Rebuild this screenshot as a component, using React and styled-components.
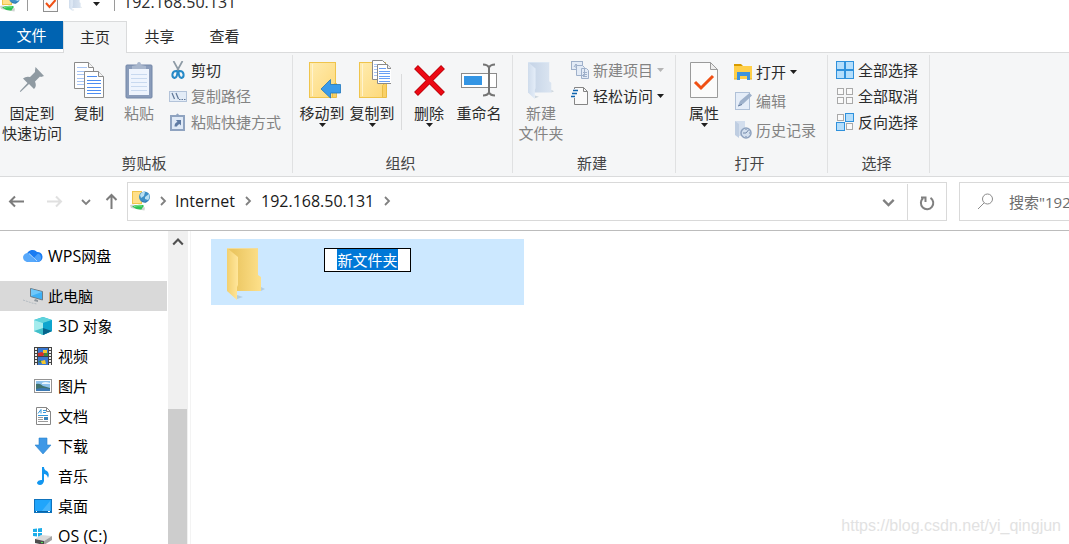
import React, { useEffect, useRef } from 'react';
import styled, { createGlobalStyle } from 'styled-components';

const GlobalStyle = createGlobalStyle`
  * {
    box-sizing: border-box;
  }

  body {
    margin: 0;
    overflow: hidden;
    background: #ffffff;
  }

  body, button, input {
    font-family: 'Open Sans', 'Noto Sans CJK SC', sans-serif;
    font-size: 15px;
    line-height: 20px;
    color: #2b2b2b;
  }

  button {
    margin: 0;
    padding: 0;
    border: none;
    background: none;
    white-space: nowrap;
  }

  svg {
    display: block;
    flex: none;
  }
`;

const Window = styled.div`
  display: flex;
  flex-direction: column;
  height: 100vh;
`;

const Latin = styled.span`
  font-size: 16px;
`;

/* Title bar */

const TitleBar = styled.header`
  display: flex;
  align-items: flex-end;
  height: 21px;
  flex: none;
  overflow: hidden;
`;

const TitleRow = styled.div`
  display: flex;
  align-items: center;
  height: 38px;
  flex: none;
`;

const QuickButton = styled.button`
  display: flex;
  align-items: center;
  justify-content: center;
  width: ${(props) => props.$width || 26}px;
  height: 20px;
`;

const TitleDivider = styled.div`
  width: 1px;
  height: 18px;
  margin: 0 8px 0 7px;
  background: #9a9a9a;
`;

/* Ribbon */

const Tabs = styled.nav`
  display: flex;
  align-items: flex-start;
  height: 31px;
  flex: none;
`;

const FileTab = styled.button`
  width: 63px;
  height: 28px;
  background: #0063b1;
  color: #ffffff;
`;

const Tab = styled.button`
  width: 65px;
  height: 32px;
  padding-bottom: 2px;
  ${(props) =>
    props.$active &&
    `
    position: relative;
    z-index: 1;
    width: 64px;
    background: #f5f6f7;
    border: 1px solid #dadbdc;
    border-bottom: none;
  `}
`;

const Ribbon = styled.div`
  display: flex;
  flex: none;
  padding: 2px 0 3px;
  background: #f5f6f7;
  border-top: 1px solid #dadbdc;
  border-bottom: 1px solid #dadbdc;
`;

const Group = styled.section`
  display: flex;
  flex-direction: column;
  width: ${(props) => props.$width}px;
  flex: none;
  border-right: 1px solid #e0e1e2;
`;

const GroupBody = styled.div`
  display: flex;
  height: 98px;
  padding-left: ${(props) => props.$indent || 0}px;
`;

const GroupLabel = styled.div`
  padding-right: 4px;
  text-align: center;
  color: #444444;
`;

const BigButton = styled.button`
  display: flex;
  flex-direction: column;
  align-items: center;
  width: ${(props) => props.$width || 50}px;
  padding-top: 5px;
  color: ${(props) => (props.disabled ? '#838383' : '#2b2b2b')};
`;

const BigIcon = styled.span`
  display: flex;
  align-items: center;
  justify-content: center;
  height: 40px;
  margin-bottom: 3px;
`;

const ButtonDivider = styled.div`
  width: 1px;
  height: 56px;
  margin: 19px 2px 0 4px;
  background: #dadbdc;
`;

const SmallList = styled.div`
  display: flex;
  flex-direction: column;
  padding-top: 2px;
  margin-left: ${(props) => props.$indent || 0}px;
`;

const SmallButton = styled.button`
  display: flex;
  align-items: center;
  gap: 4px;
  height: ${(props) => (props.$tall ? 29 : 26)}px;
  color: ${(props) => (props.disabled ? '#838383' : '#2b2b2b')};
`;

/* Address bar */

const AddressRow = styled.div`
  display: flex;
  flex: none;
  padding: 5px 0 9px;
  border-bottom: 1px solid #bcbcbc;
`;

const NavButtons = styled.div`
  display: flex;
  align-items: center;
  width: 127px;
`;

const NavButton = styled.button`
  display: flex;
  align-items: center;
  justify-content: center;
  width: ${(props) => props.$width}px;
  height: 39px;
`;

const AddressBox = styled.div`
  display: flex;
  flex: 1;
  align-items: center;
  height: 39px;
  padding: 0 0 2px 2px;
  border: 1px solid #d9d9d9;
`;

const Crumb = styled.button`
  font-size: 16px;
  color: #1a1a1a;
`;

const CrumbArrow = styled.span`
  display: flex;
  justify-content: center;
  width: ${(props) => props.$width || 26}px;
`;

const AddressEnd = styled.div`
  display: flex;
  align-items: center;
  align-self: flex-start;
  margin-left: auto;
`;

const RefreshButton = styled(NavButton)`
  height: 37px;
  border-left: 1px solid #d9d9d9;
`;

const SearchBox = styled.label`
  display: flex;
  align-items: center;
  width: 110px;
  height: 39px;
  margin-left: 12px;
  padding-left: 17px;
  border: 1px solid #d9d9d9;
  border-right: none;
`;

const SearchInput = styled.input`
  flex: 1;
  min-width: 0;
  margin-left: 15px;
  padding: 0;
  border: none;
  outline: none;

  &::placeholder {
    color: #6d6d6d;
  }
`;

/* Body */

const Body = styled.div`
  display: flex;
  flex: 1;
  min-height: 0;
`;

const Sidebar = styled.aside`
  width: 167px;
  flex: none;
  padding-top: 10px;
  overflow: hidden;
`;

const TreeItem = styled.button`
  display: flex;
  align-items: center;
  gap: 5px;
  width: 100%;
  height: 30px;
  margin-bottom: ${(props) => (props.$spaced ? 10 : 0)}px;
  padding-left: ${(props) => (props.$child ? 33 : 23)}px;
  background: ${(props) => (props.$selected ? '#d9d9d9' : 'transparent')};
  color: #000000;
`;

const TreeIcon = styled.span`
  width: 20px;
`;

const ScrollBar = styled.div`
  display: flex;
  flex-direction: column;
  width: 20px;
  margin-left: 1px;
  flex: none;
  background: #f0f0f0;
`;

const ScrollUp = styled.button`
  display: flex;
  justify-content: center;
  height: 20px;
  padding-top: 5px;
`;

const ScrollThumb = styled.div`
  flex: 1;
  width: 19px;
  margin-top: 158px;
  background: #cdcdcd;
`;

const Files = styled.main`
  flex: 1;
  margin-left: 2px;
  padding: 8px 20px;
  border-left: 1px solid #f3f3f3;
`;

const FileItem = styled.div`
  display: flex;
  align-items: flex-start;
  width: 313px;
  height: 66px;
  padding: 9px 0 0 16px;
  background: #cce8ff;
`;

const Thumbnail = styled.div`
  width: 97px;
`;

const NameInput = styled.input`
  width: 87px;
  height: 24px;
  padding: 0 0 2px;
  border: 1px solid #000000;
  border-radius: 0;
  outline: none;
  text-align: center;

  &::selection {
    background: #0078d7;
    color: #ffffff;
  }
`;

const Watermark = styled.div`
  position: absolute;
  right: 8px;
  bottom: 8px;
  font-family: 'Liberation Sans', sans-serif;
  font-size: 16px;
  color: #e2e2e2;
`;

/* Icons */

const Caret = ({ color = '#1e1e1e' }) => (
  <svg width="7" height="4" viewBox="0 0 7 4">
    <path d="M0 0h7L3.5 4z" fill={color} />
  </svg>
);

const Chevron = ({ rotate = 0, color = '#808080', size = 10 }) => (
  <svg width={size} height={size} viewBox="0 0 10 10">
    <path
      d="M3 1l4 4-4 4"
      fill="none"
      stroke={color}
      strokeWidth="1.8"
      transform={`rotate(${rotate} 5 5)`}
    />
  </svg>
);

const Arrow = ({ rotate = 0, color = '#7c7c7c' }) => (
  <svg width="17" height="17" viewBox="0 0 17 17">
    <path
      d="M16 8.500H2M7 3.500L2 8.500 7 13.500"
      fill="none"
      stroke={color}
      strokeWidth="2"
      transform={`rotate(${rotate} 8.500 8.500)`}
    />
  </svg>
);

const NetworkIcon = () => (
  <svg width="20" height="20" viewBox="0 0 20 20">
    <rect x="2.500" y=".5" width="9" height="12" fill="#ffe08a" stroke="#efc44c" />
    <path d="M0 14l3-.5 12 3-.5 3-3-.5L1 17z" fill="#d0d4d2" />
    <path d="M2 15.500q4-2.500 11-1.500l1 1q-2 1.500-2.500 3.500-5 .5-9.500-3z" fill="#2fc553" />
    <path d="M4 15.500q4-1.500 8-.5" fill="none" stroke="#7fe493" />
    <circle cx="14.500" cy="6" r="5.500" fill="#3d8fc6" />
    <path d="M10 4q2-4 5-3l-1 4-3 2zM15 6l4-3q1 4-1 6l-3-1z" fill="#b9e0f3" />
    <path d="M11 9q4 4 7 0l-2 2.500q-3 .5-5-2.500z" fill="#205d8d" />
  </svg>
);

const CheckPage = ({ width = 28, height = 36 }) => (
  <svg width={width} height={height} viewBox="0 0 28 36" preserveAspectRatio="none">
    <path d="M.5.5h20l7 7v28H.5z" fill="#fbfbfb" stroke="#9b9b9b" />
    <path d="M20.500.5v7h7z" fill="#ededed" stroke="#9b9b9b" />
    <path d="M5 20l6 6 12-12" fill="none" stroke="#f05014" strokeWidth="3" />
  </svg>
);

const QuickCheckIcon = () => (
  <svg width="15" height="19" viewBox="0 0 15 19">
    <rect x=".5" y=".5" width="14" height="18" fill="#fbfbfb" stroke="#8f8f8f" />
    <path d="M3 10l3.500 4L12.500 7" fill="none" stroke="#f05014" strokeWidth="2" />
  </svg>
);

const FolderShape = ({ width = 26, height = 37, faded }) => (
  <svg width={width} height={height} viewBox="0 0 38 52" preserveAspectRatio="none">
    <defs>
      <linearGradient id={faded ? 'fadedBack' : 'folderBack'}>
        <stop offset=".2" stopColor={faded ? '#c8d6e8' : '#ebc661'} />
        <stop offset="1" stopColor={faded ? '#dbe5f1' : '#fde08a'} />
      </linearGradient>
      <linearGradient id={faded ? 'fadedFlap' : 'folderFlap'}>
        <stop offset="0" stopColor={faded ? '#cfdcec' : '#f3d06f'} />
        <stop offset="1" stopColor={faded ? '#e4edf8' : '#ffe69b'} />
      </linearGradient>
    </defs>
    <path d="M34 43l4-2-4-2zM10 51l6-2-6-2z" fill="#8fa5b3" opacity=".4" />
    <path d="M0 0h31v27l3 2v14H0z" fill={`url(#${faded ? 'fadedBack' : 'folderBack'})`} />
    <path d="M0 0l11 9v28l-1 2v13L0 43z" fill={`url(#${faded ? 'fadedFlap' : 'folderFlap'})`} />
    <path d="M0 .5h31" stroke={faded ? '#e4edf8' : '#f2dc9c'} />
  </svg>
);

const PinIcon = () => (
  <svg width="26" height="28" viewBox="0 0 26 28">
    <path
      d="M16.500 1l8.500 9-3 1-1-.5-5 5q2 5-1 7.500l-5-5-8.500 8-.7-.7L8.500 17 4 12.500q3-2.500 7-1.500l5-5V4.500z"
      fill="#8f9aa2"
    />
  </svg>
);

const PageLines = ({ x, y, color }) => (
  <g transform={`translate(${x} ${y})`}>
    <path d="M.5.5h14l5 5v21H.5z" fill="#ffffff" stroke="#8a8a8a" />
    <path d="M14.500.5v5h5" fill="#f3f3f3" stroke="#8a8a8a" />
    <path d="M3 5.500h10M3 9.500h14M3 12.500h14M3 16.500h14M3 19.500h14M3 22.500h14" stroke={color} />
  </g>
);

const CopyIcon = () => (
  <svg width="30" height="36" viewBox="0 0 30 36">
    <PageLines x="0" y="0" color="#a8c5f5" />
    <PageLines x="10" y="9" color="#4d8df2" />
  </svg>
);

const PasteIcon = () => (
  <svg width="28" height="38" viewBox="0 0 28 38">
    <rect x="1" y="4" width="26" height="33" rx="1" fill="#8a9cba" stroke="#7387a8" />
    <path d="M4 8h20v26H4z" fill="#eef4fd" />
    <path d="M6 13.500h16M6 17.500h16M6 21.500h16M6 25.500h16M6 29.500h16" stroke="#c8d9ef" />
    <path d="M7 8V5l5-1q0-3 2-3t2 3l5 1v3z" fill="#a9b7cd" />
  </svg>
);

const ScissorsIcon = () => (
  <svg width="18" height="18" viewBox="0 0 18 18">
    <path d="M4.500 0l5.500 10M13.500 0L8 10" stroke="#8d9aa5" strokeWidth="1.700" />
    <path
      d="M8.500 10Q4 9.500 3.500 13t2 4q3-.5 3-7M9.500 10q4.500-.5 5 3t-2 4q-3-.5-3-7"
      fill="none"
      stroke="#2589c7"
      strokeWidth="2"
    />
  </svg>
);

const CopyPathIcon = () => (
  <svg width="18" height="18" viewBox="0 0 18 18">
    <rect x=".5" y="4.500" width="17" height="10" fill="#e3ecf7" stroke="#b3c3d9" />
    <path d="M3 6l2.500 6M7 6l2.500 6" stroke="#5f7797" strokeWidth="1.200" />
    <path d="M10 12.500h1.500M12.500 12.500H14M15 12.500h1.500" stroke="#5f7797" />
  </svg>
);

const PasteLinkIcon = () => (
  <svg width="18" height="18" viewBox="0 0 18 18">
    <rect x="2" y="3" width="13" height="14" fill="#dfe9f6" stroke="#8fa3c0" strokeWidth="2" />
    <path d="M4 4V2h3q1.500-3 3 0h3v2z" fill="#8fa3c0" />
    <path d="M5.500 13.500q0-4 3-4.500l-1.500-2h5v5.500l-1.500-1.500q-2 .5-2.500 2.500z" fill="#5f7ba3" />
  </svg>
);

const YellowFolder = ({ children }) => (
  <svg width="38" height="40" viewBox="0 0 38 40">
    <defs>
      <linearGradient id="yellowFolder" x2="1" y2="1">
        <stop offset="0" stopColor="#ffecb0" />
        <stop offset="1" stopColor="#fdd878" />
      </linearGradient>
    </defs>
    <rect x="6.500" y="2.500" width="26" height="35" fill="url(#yellowFolder)" stroke="#efc44c" />
    <path d="M9.500 4v32" stroke="#fff3cf" />
    <path d="M29.500 37.500V25.500l2-2h2v14z" fill="#f9d067" stroke="#e9bd47" />
    {children}
  </svg>
);

const MoveToIcon = () => (
  <YellowFolder>
    <path d="M18 29l9.500-9.500v5h10v8.500h-10v5z" fill="#3b9bea" stroke="#1f77be" strokeWidth=".8" />
  </YellowFolder>
);

const CopyToIcon = () => (
  <YellowFolder>
    <g transform="translate(19 0)" strokeWidth="1">
      <path d="M.5.5h10l4 4v15H.5z" fill="#ffffff" stroke="#8a8a8a" />
      <path d="M2 4.500h7M2 6.500h7M2 9.500h7M2 12.500h7M2 15.500h7" stroke="#a8c5f5" />
      <path d="M5.500 4.500h10l4 4v15h-14z" fill="#ffffff" stroke="#8a8a8a" />
      <path d="M15.500 4.500v4h4" fill="#eeeeee" stroke="#8a8a8a" />
      <path d="M7 8.500h7M7 11.500h11M7 13.500h11M7 16.500h11M7 18.500h11M7 21.500h11" stroke="#6a9ff5" />
    </g>
  </YellowFolder>
);

const DeleteIcon = () => (
  <svg width="32" height="32" viewBox="0 0 32 32">
    <path d="M3 3l27 27M30 3L3 30" stroke="#b50009" strokeWidth="5.500" />
    <path d="M3.500 3.500l26 26M29.500 3.500l-26 26" stroke="#ec0914" strokeWidth="4" />
  </svg>
);

const RenameIcon = () => (
  <svg width="36" height="34" viewBox="0 0 36 34">
    <rect x=".5" y="10.500" width="35" height="14" fill="#ffffff" stroke="#8b8b8b" />
    <rect x="3" y="13" width="18" height="9" fill="#3495e4" />
    <path d="M28 4v26" stroke="#747474" strokeWidth="2" />
    <path
      d="M22 1.500q4.500 0 6 3 1.500-3 6-3M22 32.500q4.500 0 6-3 1.500 3 6 3"
      fill="none"
      stroke="#747474"
      strokeWidth="2"
    />
  </svg>
);

const NewItemIcon = () => (
  <svg width="18" height="18" viewBox="0 0 18 18" fill="#e3ebf6" stroke="#9fb0ca">
    <rect x=".5" y=".5" width="11" height="8" />
    <path d="M3 6l2-3 2 3M5 3v4" />
    <path d="M5.500 4.500h6l2 2v8h-8zM10.500 7.500h5l2 2v8h-7z" />
    <path d="M12 11.500h4M12 13.500h4M12 15.500h4" />
  </svg>
);

const EasyAccessIcon = () => (
  <svg width="18" height="18" viewBox="0 0 18 18">
    <path d="M3.500.5h9l4 4v13h-13z" fill="#fafafa" stroke="#858585" />
    <path d="M12.500.5v4h4" fill="none" stroke="#858585" />
    <path d="M2 3.500h5M1 6.500h5M0 9.500h4" stroke="#f5f6f7" strokeWidth="3" />
    <path d="M2 3.500h5M1 6.500h5M0 9.500h4" stroke="#1065ae" strokeWidth="1.500" />
  </svg>
);

const OpenIcon = () => (
  <svg width="18" height="18" viewBox="0 0 18 18">
    <path d="M0 1h7l2 2H0z" fill="#d89b00" />
    <path d="M0 3h18v13H0z" fill="#ffcf48" />
    <path d="M3 17V9h13v8h-3v-4H6v4z" fill="#3c93dd" />
    <path d="M0 16h3M16 16h2" stroke="#e4ac1e" />
  </svg>
);

const EditIcon = () => (
  <svg width="18" height="18" viewBox="0 0 18 18">
    <rect x="1.500" y=".5" width="14" height="17" fill="#e5edf8" stroke="#b0c1d8" />
    <path d="M4 14l2-5L15.500 1 18 3.500 9 12z" fill="#9eb1cb" />
    <path d="M4 14l4-1.500" stroke="#667d9f" />
  </svg>
);

const HistoryIcon = () => (
  <svg width="18" height="18" viewBox="0 0 18 18">
    <path d="M1 0h10v15H4z" fill="#d3deed" />
    <path d="M1 0l4 3v14l-4-3z" fill="#bfcee2" />
    <circle cx="12" cy="12" r="5" fill="#d3dfee" stroke="#8ea2bf" strokeWidth="1.500" />
    <path d="M12 12l2.500-3M12 12H9M12 8v1M12 15v1M15 12h1" stroke="#7288a9" />
  </svg>
);

const SelectIcon = ({ on }) => (
  <svg width="18" height="18" viewBox="0 0 18 18">
    {[0, 1, 2, 3].map((i) => {
      const x = (i % 2) * 9;
      const y = i > 1 ? 9 : 0;
      return on.includes(i) ? (
        <rect key={i} x={x + 0.5} y={y + 0.5} width="8" height="8" fill="#b4defc" stroke="#2f91dc" />
      ) : (
        <rect key={i} x={x + 1.5} y={y + 1.5} width="6" height="6" fill="#fafafa" stroke="#a9a9a9" />
      );
    })}
  </svg>
);

const RefreshIcon = () => (
  <svg width="16" height="16" viewBox="0 0 16 16">
    <path
      d="M11.500 2.800A6.200 6.200 0 1 1 4 3.300M2 2.500h4.500V7"
      fill="none"
      stroke="#808080"
      strokeWidth="2"
    />
  </svg>
);

const SearchIcon = () => (
  <svg width="17" height="17" viewBox="0 0 17 17" fill="none" stroke="#8c8c8c">
    <circle cx="10.500" cy="6" r="5" />
    <path d="M7 10l-6 6" />
  </svg>
);

const CloudIcon = () => (
  <svg width="20" height="14" viewBox="0 0 20 14">
    <path d="M5 13a4.500 4.500 0 0 1-1-8.500A6 6 0 0 1 14 3a5 5 0 0 1 1 10z" fill="#1b7cf2" />
    <path d="M7 13l8-8.500A4.500 4.500 0 0 1 15 13z" fill="#4ba0fb" />
    <path d="M0 8q1-4 5-4 4 1 7 9H5q-5-.5-5-5z" fill="#58a9fb" />
    <path d="M6 4.500L14 12" stroke="#c9e3ff" strokeWidth=".8" />
  </svg>
);

const ComputerIcon = () => (
  <svg width="20" height="18" viewBox="0 0 20 18">
    <path d="M7.500 1.500l12 3v8.500l-12-3.500z" fill="#3eb0f5" stroke="#6d7c86" />
    <path d="M8 2l11 3-11 4z" fill="#6fc8fa" />
    <path d="M12 12l3 1v2l-4-1z" fill="#8e969c" />
    <path d="M0 13l9 3 5 1" fill="none" stroke="#b4bcc2" strokeDasharray="2 1" />
  </svg>
);

const CubeIcon = () => (
  <svg width="20" height="18" viewBox="0 0 20 18">
    <path d="M10 0l9 3v11l-9 4-9-4V3z" fill="#22b8d4" />
    <path d="M10 0l9 3-9 3-9-3z" fill="#5fd3dc" />
    <path d="M1 3l9 3v12l-9-4z" fill="#a4eced" />
    <path d="M10 6v12l9-4V3z" fill="#0da5ce" />
    <path d="M1 14l9-3v7z" fill="#41bfca" />
    <path d="M10 11l9 3-9 4z" fill="#07648b" />
  </svg>
);

const VideoIcon = () => (
  <svg width="20" height="18" viewBox="0 0 20 18">
    <path d="M1 0h18v18H1z" fill="#424242" />
    <path d="M3 1v17M17 1v17" stroke="#eeeeee" strokeWidth="2" strokeDasharray="2 1" />
    <path d="M5 1h10v8H5zM5 10h10v8H5z" fill="#3978d2" />
    <path d="M5 6l4-1 3 2-2 2H5z" fill="#d5302a" />
    <path d="M10 3h4v3h-4zM8 14l4-1 1 4H9z" fill="#f6c62d" />
    <path d="M11 6h4v3h-4zM5 15l3-2v3z" fill="#3f8a3b" />
  </svg>
);

const PictureIcon = () => (
  <svg width="20" height="14" viewBox="0 0 20 14">
    <rect x="1.500" y=".5" width="17" height="13" fill="#ffffff" stroke="#949494" />
    <path d="M3 2h14v10H3z" fill="#8fc3ed" />
    <path d="M3 5q4-1 7 2l7 2v1H3z" fill="#41736e" />
    <path d="M3 10q7-2 14 0v2H3z" fill="#3d7ab4" />
    <path d="M9 4q3-2 8 0v1H9z" fill="#eaf5fd" />
  </svg>
);

const DocumentIcon = () => (
  <svg width="20" height="18" viewBox="0 0 20 18">
    <path d="M3.500.5h10l4 4v13h-14z" fill="#ffffff" stroke="#868686" />
    <path d="M13.500.5v4h4" fill="none" stroke="#868686" />
    <path d="M5 6.500L8 2.500v4M10 3.500h3M10 5.500h3M5 8.500h10" fill="none" stroke="#3297db" />
    <path d="M5 10.500h5M5 12.500h5M5 14.500h10" stroke="#9b9b9b" />
    <path d="M11 10h4v3h-4z" fill="#3b83b9" />
  </svg>
);

const DownloadIcon = () => (
  <svg width="20" height="18" viewBox="0 0 20 18">
    <path d="M6 1h8v7h4l-8 9-8-9h4z" fill="#3e98e6" stroke="#2a83cf" strokeWidth=".6" />
  </svg>
);

const MusicIcon = () => (
  <svg width="20" height="18" viewBox="0 0 20 18">
    <path d="M9 0h2q0 3 3 4 3 3 1 7-1-4-4-4v7q-1 4-4 4-3-.5-3-2.500 1-3 5-2.500z" fill="#1196f0" />
  </svg>
);

const DesktopIcon = () => (
  <svg width="20" height="14" viewBox="0 0 20 14">
    <rect x="1.500" y=".5" width="17" height="13" fill="#20a5fb" stroke="#0f73bd" />
    <path d="M8 13l9-11v11z" fill="#46b5fc" />
    <path d="M2 12.500h16" stroke="#0865a8" />
    <path d="M3 12.500h1M15 12.500h2" stroke="#ffffff" />
  </svg>
);

const DriveIcon = () => (
  <svg width="20" height="18" viewBox="0 0 20 18">
    <path d="M0 2l4-.5V5H0zM5 1.500L9 1v4H5zM0 6h4v3.500L0 9zM5 6h4v4l-4-.5z" fill="#1cade9" />
    <path d="M2 12l6-4 11 1-8 5z" fill="#d9d9d9" />
    <path d="M2 12l9 2v4l-9-2z" fill="#4e4e4e" />
    <path d="M11 14l8-5v4l-8 5z" fill="#a3a3a3" />
    <path d="M8 15.500h2" stroke="#4fe153" />
  </svg>
);

const folders = [
  { label: '3D', cjk: ' 对象', icon: CubeIcon },
  { cjk: '视频', icon: VideoIcon },
  { cjk: '图片', icon: PictureIcon },
  { cjk: '文档', icon: DocumentIcon },
  { cjk: '下载', icon: DownloadIcon },
  { cjk: '音乐', icon: MusicIcon },
  { cjk: '桌面', icon: DesktopIcon },
  { label: 'OS (C:)', icon: DriveIcon },
];

const Big = ({ icon, lines, menu, ...rest }) => (
  <BigButton {...rest}>
    <BigIcon>{icon}</BigIcon>
    {lines.map((line) => (
      <span key={line}>{line}</span>
    ))}
    {menu && <Caret />}
  </BigButton>
);

const Small = ({ icon, children, menu, ...rest }) => (
  <SmallButton {...rest}>
    {icon}
    <span>{children}</span>
    {menu && <Caret color={rest.disabled ? '#b5b5b5' : '#1e1e1e'} />}
  </SmallButton>
);

const TreeRow = ({ icon, label, cjk, ...rest }) => (
  <TreeItem {...rest}>
    <TreeIcon>{icon}</TreeIcon>
    <span>
      {label && <Latin>{label}</Latin>}
      {cjk}
    </span>
  </TreeItem>
);

const App = () => {
  const nameRef = useRef(null);

  useEffect(() => {
    nameRef.current.focus();
    nameRef.current.select();
  }, []);

  return (
    <Window>
      <GlobalStyle />
      <TitleBar>
        <TitleRow>
          <NetworkIcon />
          <TitleDivider />
          <QuickButton $width={29} aria-label="属性">
            <QuickCheckIcon />
          </QuickButton>
          <QuickButton $width={21} aria-label="新建文件夹">
            <FolderShape width={13} height={18} faded />
          </QuickButton>
          <QuickButton $width={21} aria-label="自定义快速访问工具栏">
            <svg width="7" height="7" viewBox="0 0 7 7">
              <path d="M0 0h7v1H0zM0 3h7L3.500 7z" fill="#1e1e1e" />
            </svg>
          </QuickButton>
          <TitleDivider />
          <Latin>192.168.50.131</Latin>
        </TitleRow>
      </TitleBar>

      <Tabs>
        <FileTab>文件</FileTab>
        <Tab $active>主页</Tab>
        <Tab>共享</Tab>
        <Tab>查看</Tab>
      </Tabs>

      <Ribbon>
        <Group $width={293}>
          <GroupBody>
            <Big $width={64} icon={<PinIcon />} lines={['固定到', '快速访问']} />
            <Big icon={<CopyIcon />} lines={['复制']} />
            <Big icon={<PasteIcon />} lines={['粘贴']} disabled />
            <SmallList $indent={5}>
              <Small icon={<ScissorsIcon />}>剪切</Small>
              <Small icon={<CopyPathIcon />} disabled>复制路径</Small>
              <Small icon={<PasteLinkIcon />} disabled>粘贴快捷方式</Small>
            </SmallList>
          </GroupBody>
          <GroupLabel>剪贴板</GroupLabel>
        </Group>

        <Group $width={220}>
          <GroupBody $indent={4}>
            <Big icon={<MoveToIcon />} lines={['移动到']} menu />
            <Big icon={<CopyToIcon />} lines={['复制到']} menu />
            <ButtonDivider />
            <Big icon={<DeleteIcon />} lines={['删除']} menu />
            <Big icon={<RenameIcon />} lines={['重命名']} />
          </GroupBody>
          <GroupLabel>组织</GroupLabel>
        </Group>

        <Group $width={163}>
          <GroupBody>
            <Big $width={56} icon={<FolderShape faded />} lines={['新建', '文件夹']} disabled />
            <SmallList $indent={2}>
              <Small icon={<NewItemIcon />} disabled menu>新建项目</Small>
              <Small icon={<EasyAccessIcon />} menu>轻松访问</Small>
            </SmallList>
          </GroupBody>
          <GroupLabel>新建</GroupLabel>
        </Group>

        <Group $width={152}>
          <GroupBody>
            <Big $width={56} icon={<CheckPage />} lines={['属性']} menu />
            <SmallList $indent={2}>
              <Small $tall icon={<OpenIcon />} menu>打开</Small>
              <Small $tall icon={<EditIcon />} disabled>编辑</Small>
              <Small $tall icon={<HistoryIcon />} disabled>历史记录</Small>
            </SmallList>
          </GroupBody>
          <GroupLabel>打开</GroupLabel>
        </Group>

        <Group $width={102}>
          <GroupBody>
            <SmallList $indent={8}>
              <Small icon={<SelectIcon on={[0, 1, 2, 3]} />}>全部选择</Small>
              <Small icon={<SelectIcon on={[]} />}>全部取消</Small>
              <Small icon={<SelectIcon on={[1, 2]} />}>反向选择</Small>
            </SmallList>
          </GroupBody>
          <GroupLabel>选择</GroupLabel>
        </Group>
      </Ribbon>

      <AddressRow>
        <NavButtons>
          <NavButton $width={33} aria-label="返回"><Arrow /></NavButton>
          <NavButton $width={43} aria-label="前进"><Arrow rotate={180} color="#e0e0e0" /></NavButton>
          <NavButton $width={20} aria-label="最近位置"><Chevron rotate={90} /></NavButton>
          <NavButton $width={30} aria-label="上移"><Arrow rotate={90} /></NavButton>
        </NavButtons>
        <AddressBox>
          <NetworkIcon />
          <CrumbArrow $width={25}><Chevron /></CrumbArrow>
          <Crumb>Internet</Crumb>
          <CrumbArrow><Chevron /></CrumbArrow>
          <Crumb>192.168.50.131</Crumb>
          <CrumbArrow><Chevron /></CrumbArrow>
          <AddressEnd>
            <NavButton $width={38} aria-label="以前的位置"><Chevron rotate={90} size={13} /></NavButton>
            <RefreshButton $width={39} aria-label="刷新"><RefreshIcon /></RefreshButton>
          </AddressEnd>
        </AddressBox>
        <SearchBox>
          <SearchIcon />
          <SearchInput aria-label="搜索" placeholder={'搜索"192.168.50.131"'} />
        </SearchBox>
      </AddressRow>

      <Body>
        <Sidebar>
          <TreeRow $spaced icon={<CloudIcon />} label="WPS" cjk="网盘" />
          <TreeRow $selected icon={<ComputerIcon />} cjk="此电脑" />
          {folders.map(({ icon: Icon, label, cjk }) => (
            <TreeRow key={label || cjk} $child icon={<Icon />} label={label} cjk={cjk} />
          ))}
        </Sidebar>
        <ScrollBar>
          <ScrollUp aria-label="向上滚动">
            <Chevron rotate={-90} color="#505050" size={12} />
          </ScrollUp>
          <ScrollThumb />
        </ScrollBar>
        <Files>
          <FileItem>
            <Thumbnail>
              <FolderShape width={38} height={52} />
            </Thumbnail>
            <NameInput ref={nameRef} aria-label="文件夹名称" defaultValue="新文件夹" />
          </FileItem>
        </Files>
      </Body>
      <Watermark>https://blog.csdn.net/yi_qingjun</Watermark>
    </Window>
  );
};

export default App;
